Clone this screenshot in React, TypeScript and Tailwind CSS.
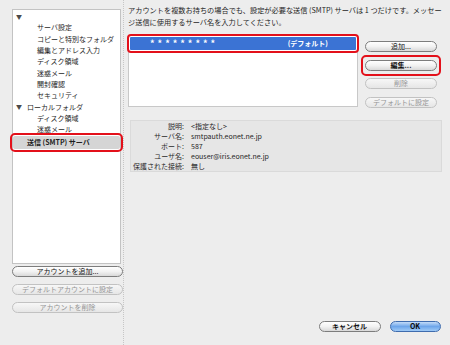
import type { ReactNode } from 'react';

const tree = [
  { label: '', level: 0, arrow: true },
  { label: 'サーバ設定', level: 2 },
  { label: 'コピーと特別なフォルダ', level: 2 },
  { label: '編集とアドレス入力', level: 2 },
  { label: 'ディスク領域', level: 2 },
  { label: '迷惑メール', level: 2 },
  { label: '開封確認', level: 2 },
  { label: 'セキュリティ', level: 2 },
  { label: 'ローカルフォルダ', level: 1, arrow: true },
  { label: 'ディスク領域', level: 2 },
  { label: '迷惑メール', level: 2 },
];

const details = [
  { label: '説明:', value: '<指定なし>' },
  { label: 'サーバ名:', value: 'smtpauth.eonet.ne.jp' },
  { label: 'ポート:', value: '587' },
  { label: 'ユーザ名:', value: 'eouser@iris.eonet.ne.jp' },
  { label: '保護された接続:', value: '無し' },
];

function AquaButton({
  children,
  disabled,
  primary,
  className = '',
}: {
  children: ReactNode;
  disabled?: boolean;
  primary?: boolean;
  className?: string;
}) {
  let look =
    'border-[#7d7d7d] bg-linear-to-b from-white via-[#f2f2f2] to-[#d9d9d9] text-[#111]';
  if (disabled) look = 'border-[#c2c2c2] bg-linear-to-b from-[#f7f7f7] to-[#e6e6e6] text-[#959595]';
  if (primary)
    look = 'border-[#3f6cae] bg-linear-to-b from-[#c4dcf8] via-[#6ea6ea] to-[#9fcaf6] text-[#0a0a0a] font-bold';
  return (
    <div
      className={`h-[11px] rounded-full border flex items-center justify-center text-[7px] leading-none ${look} ${className}`}
    >
      {children}
    </div>
  );
}

export default function App() {
  return (
    <div
      className="w-[450px] h-[345px] bg-[#ededed] flex text-[#1e1e1e] overflow-hidden"
      style={{ fontFamily: '"Noto Sans CJK JP", "Liberation Sans", sans-serif' }}
    >
      {/* Account list */}
      <aside className="w-[124px] shrink-0 pl-[12px] pt-[9px] border-r border-dotted border-[#c6c6c6] flex flex-col">
        <div className="w-[109px] h-[255px] bg-white border border-[#c3c3c3] pt-[1px]">
          {tree.map((item, i) => (
            <div key={i} className="h-[11.3px] flex items-center text-[7px] leading-none">
              {item.arrow ? (
                <span className="ml-[3px] w-[8px] text-[6px] text-[#4a4a4a]">▼</span>
              ) : (
                <span className="ml-[3px] w-[8px]" />
              )}
              <span className={item.level === 2 ? 'ml-[13px]' : 'ml-[3px]'}>{item.label}</span>
            </div>
          ))}
          <div className="h-[12.5px] mt-[1px] bg-[#d5d5d5] flex items-center text-[7px] leading-none font-bold pl-[14px] rounded-[2px] outline-2 outline-[#e3101a] outline-offset-[1px]">
            送信 (SMTP) サーバ
          </div>
        </div>
        <div className="mt-[2px] w-[111px] flex flex-col gap-[7px]">
          <AquaButton>アカウントを追加...</AquaButton>
          <AquaButton disabled>デフォルトアカウントに設定</AquaButton>
          <AquaButton disabled>アカウントを削除</AquaButton>
        </div>
      </aside>

      {/* SMTP settings */}
      <main className="flex-1 pl-[4px] pr-[12px] flex flex-col">
        <p className="pt-[4px] text-[7.2px] leading-[12px] whitespace-nowrap">
          アカウントを複数お持ちの場合でも、設定が必要な送信 (SMTP) サーバは 1 つだけです。メッセー
          <br />
          ジ送信に使用するサーバ名を入力してください。
        </p>

        <div className="mt-[7px] flex">
          <div className="w-[230px] h-[72px] bg-white border border-[#c8c8c8] px-[1px] pt-[1px]">
            <div className="h-[13px] bg-[#3b73d4] text-white flex items-center text-[7px] leading-none rounded-[1px] outline-2 outline-[#e3101a] outline-offset-[1px]">
              <span className="ml-[20px] tracking-[3px] text-[9px] font-bold">*********</span>
              <span className="ml-auto mr-[28px] font-bold">(デフォルト)</span>
            </div>
          </div>
          <div className="ml-[7px] w-[72px] pt-[6px] flex flex-col gap-[7.5px]">
            <AquaButton>追加...</AquaButton>
            <div className="-mx-[1px] -my-[2px] px-[1px] py-[2px] rounded-[2px] outline-2 outline-[#e3101a] outline-offset-[1.5px]">
              <AquaButton className="font-bold">編集...</AquaButton>
            </div>
            <AquaButton disabled>削除</AquaButton>
            <AquaButton disabled>デフォルトに設定</AquaButton>
          </div>
        </div>

        <div className="mt-[12px] ml-[2px] h-[52px] bg-[#e6e6e6] border border-[#dadada] pt-[1px]">
          {details.map((d) => (
            <div key={d.label} className="h-[10px] flex items-center text-[7px] leading-none">
              <span className="w-[53px] text-right text-[#2a2a2a]">{d.label}</span>
              <span className="ml-[7px]">{d.value}</span>
            </div>
          ))}
        </div>

        <div className="mt-auto mb-[13px] pr-[1px] flex justify-end gap-[9px]">
          <AquaButton className="w-[62px] font-bold">キャンセル</AquaButton>
          <AquaButton primary className="w-[51px]">
            OK
          </AquaButton>
        </div>
      </main>
    </div>
  );
}
